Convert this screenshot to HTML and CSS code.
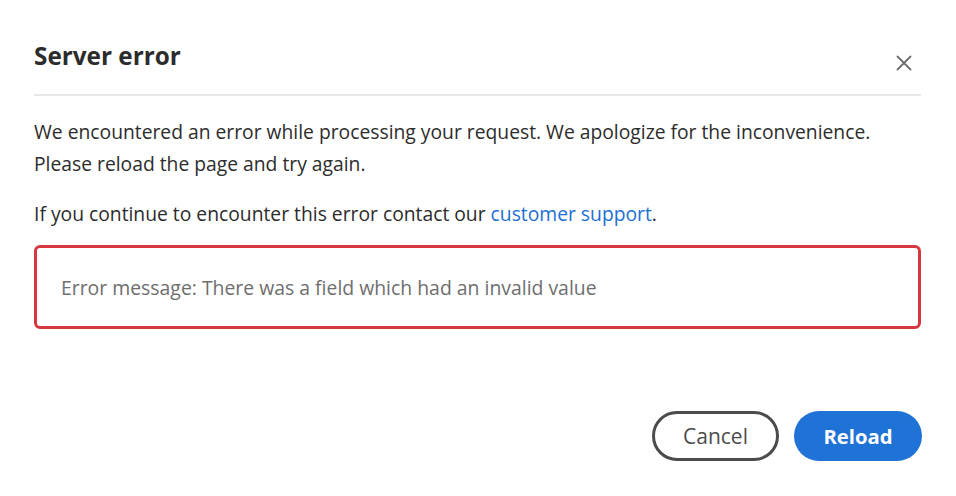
FILE: index.html
```html
<!DOCTYPE html>
<html>
<head>
<meta charset="utf-8">
<link rel="stylesheet" href="styles.css">
</head>
<body>
<div class="dialog">
  <div class="header">
    <h1 class="title">Server error</h1>
    <button class="close" aria-label="Close">
      <svg width="16" height="16" viewBox="0 0 16 16"><path d="M1.5 1.5 L14.5 14.5 M14.5 1.5 L1.5 14.5" stroke="#6e6e6e" stroke-width="1.8" fill="none" stroke-linecap="round"/></svg>
    </button>
  </div>
  <div class="divider"></div>
  <div class="content">
    <p class="text">We encountered an error while processing your request. We apologize for the inconvenience.<br>Please reload the page and try again.</p>
    <p class="text second">If you continue to encounter this error contact our <a class="link" href="#">customer support</a>.</p>
    <div class="error-box">Error message: There was a field which had an invalid value</div>
  </div>
  <div class="footer">
    <button class="btn cancel">Cancel</button>
    <button class="btn reload">Reload</button>
  </div>
</div>
</body>
</html>
```
FILE: styles.css
```css
html, body {
  margin: 0;
  padding: 0;
  background: #ffffff;
}
body {
  font-family: "Open Sans", "Noto Sans", sans-serif;
  color: #2c2c2c;
}
.dialog {
  width: 956px;
  height: 496px;
  box-sizing: border-box;
  padding: 0 35px 0 34px;
  display: flex;
  flex-direction: column;
}
.header {
  display: flex;
  align-items: center;
  justify-content: space-between;
  padding-top: 38px;
  height: 56px;
  box-sizing: content-box;
}
.title {
  margin: 0;
  font-size: 24.3px;
  font-weight: 700;
  line-height: 36px;
  color: #2c2c2c;
  align-self: flex-start;
}
.close {
  border: none;
  background: none;
  padding: 0;
  width: 16px;
  height: 16px;
  margin-right: 9px;
  margin-top: 17px;
  align-self: flex-start;
}
.close svg { display: block; }
.divider {
  height: 2px;
  background: #e8e8e8;
}
.content {
  padding-top: 20px;
}
.text {
  margin: 0;
  font-size: 19.3px;
  line-height: 32px;
  color: #2c2c2c;
}
.second {
  margin-top: 18px;
}
.link {
  color: #1c6fd3;
  text-decoration: none;
}
.error-box {
  margin-top: 15px;
  height: 84px;
  box-sizing: border-box;
  border: 3px solid #d7373f;
  border-radius: 6px;
  padding: 0 24px;
  display: flex;
  align-items: center;
  font-size: 19.4px;
  color: #6e6e6e;
}
.footer {
  display: flex;
  justify-content: flex-end;
  gap: 15px;
  margin-top: auto;
  margin-right: -1px;
  margin-bottom: 35px;
}
.btn {
  height: 50px;
  border-radius: 25px;
  font-family: "Open Sans", "Noto Sans", sans-serif;
  box-sizing: border-box;
  cursor: pointer;
  padding: 0;
}
.cancel {
  width: 127px;
  border: 3px solid #4b4b4b;
  background: #ffffff;
  color: #4b4b4b;
  font-size: 21px;
  font-weight: 400;
}
.reload {
  width: 128px;
  border: none;
  background: #1f72d6;
  color: #ffffff;
  font-size: 20.3px;
  font-weight: 700;
}
```
